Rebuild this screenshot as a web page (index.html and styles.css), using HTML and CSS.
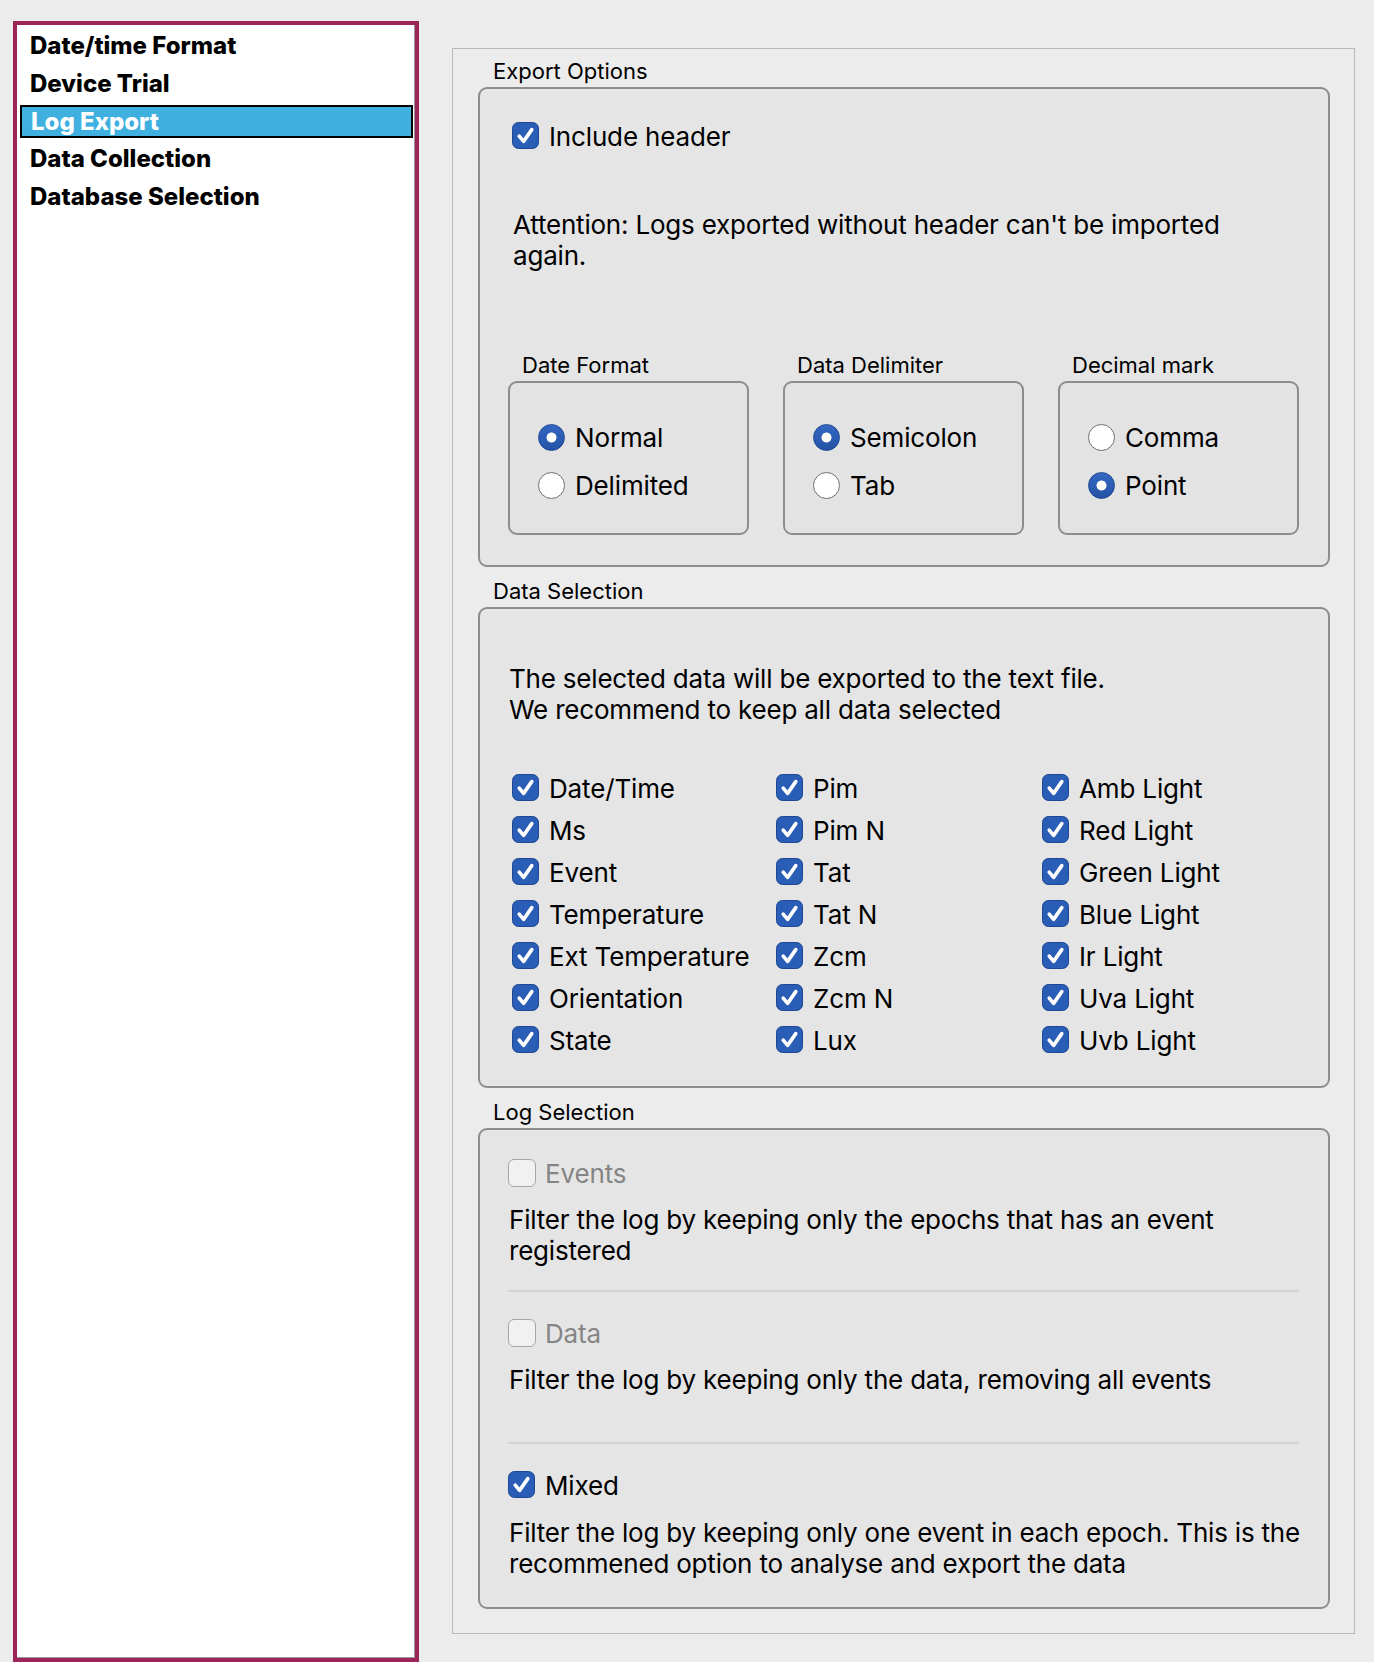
FILE: index.html
```html
<!DOCTYPE html>
<html lang="en">
<head>
<meta charset="utf-8">
<title>Log Export</title>
<link rel="stylesheet" href="styles.css">
</head>
<body>
<svg class="defs" width="0" height="0" aria-hidden="true">
  <defs>
    <symbol id="chk" viewBox="0 0 27 27">
      <rect x="0.5" y="0.5" width="26" height="26" rx="6" fill="#2a5db5" stroke="#1d4794"/>
      <path d="M7.2 14.2 L11.6 19.4 L19.8 7.6" fill="none" stroke="#fff" stroke-width="3.6" stroke-linecap="round" stroke-linejoin="round"/>
    </symbol>
  </defs>
</svg>
<div class="app">
  <aside class="sidebar">
    <ul class="nav">
      <li class="nav-item">Date/time Format</li>
      <li class="nav-item">Device Trial</li>
      <li class="nav-item selected">Log Export</li>
      <li class="nav-item">Data Collection</li>
      <li class="nav-item">Database Selection</li>
    </ul>
  </aside>

  <main class="panel">
    <section class="group">
      <div class="group-label">Export Options</div>
      <div class="group-box export-box">
        <div class="check-row include-row">
          <svg class="cb"><use href="#chk"/></svg><span>Include header</span>
        </div>
        <p class="text attention">Attention: Logs exported without header can't be imported<br>again.</p>
        <div class="subgroups">
          <div class="subgroup">
            <div class="sub-label">Date Format</div>
            <div class="sub-box">
              <div class="radio-row"><span class="radio on"></span><span>Normal</span></div>
              <div class="radio-row"><span class="radio"></span><span>Delimited</span></div>
            </div>
          </div>
          <div class="subgroup">
            <div class="sub-label">Data Delimiter</div>
            <div class="sub-box">
              <div class="radio-row"><span class="radio on"></span><span>Semicolon</span></div>
              <div class="radio-row"><span class="radio"></span><span>Tab</span></div>
            </div>
          </div>
          <div class="subgroup">
            <div class="sub-label">Decimal mark</div>
            <div class="sub-box">
              <div class="radio-row"><span class="radio"></span><span>Comma</span></div>
              <div class="radio-row"><span class="radio on"></span><span>Point</span></div>
            </div>
          </div>
        </div>
      </div>
    </section>

    <section class="group">
      <div class="group-label">Data Selection</div>
      <div class="group-box data-box">
        <p class="text data-intro">The selected data will be exported to the text file.<br>We recommend to keep all data selected</p>
        <div class="data-grid">
          <div class="check-row"><svg class="cb"><use href="#chk"/></svg><span>Date/Time</span></div>
          <div class="check-row"><svg class="cb"><use href="#chk"/></svg><span>Pim</span></div>
          <div class="check-row"><svg class="cb"><use href="#chk"/></svg><span>Amb Light</span></div>
          <div class="check-row"><svg class="cb"><use href="#chk"/></svg><span>Ms</span></div>
          <div class="check-row"><svg class="cb"><use href="#chk"/></svg><span>Pim N</span></div>
          <div class="check-row"><svg class="cb"><use href="#chk"/></svg><span>Red Light</span></div>
          <div class="check-row"><svg class="cb"><use href="#chk"/></svg><span>Event</span></div>
          <div class="check-row"><svg class="cb"><use href="#chk"/></svg><span>Tat</span></div>
          <div class="check-row"><svg class="cb"><use href="#chk"/></svg><span>Green Light</span></div>
          <div class="check-row"><svg class="cb"><use href="#chk"/></svg><span>Temperature</span></div>
          <div class="check-row"><svg class="cb"><use href="#chk"/></svg><span>Tat N</span></div>
          <div class="check-row"><svg class="cb"><use href="#chk"/></svg><span>Blue Light</span></div>
          <div class="check-row"><svg class="cb"><use href="#chk"/></svg><span>Ext Temperature</span></div>
          <div class="check-row"><svg class="cb"><use href="#chk"/></svg><span>Zcm</span></div>
          <div class="check-row"><svg class="cb"><use href="#chk"/></svg><span>Ir Light</span></div>
          <div class="check-row"><svg class="cb"><use href="#chk"/></svg><span>Orientation</span></div>
          <div class="check-row"><svg class="cb"><use href="#chk"/></svg><span>Zcm N</span></div>
          <div class="check-row"><svg class="cb"><use href="#chk"/></svg><span>Uva Light</span></div>
          <div class="check-row"><svg class="cb"><use href="#chk"/></svg><span>State</span></div>
          <div class="check-row"><svg class="cb"><use href="#chk"/></svg><span>Lux</span></div>
          <div class="check-row"><svg class="cb"><use href="#chk"/></svg><span>Uvb Light</span></div>
        </div>
      </div>
    </section>

    <section class="group">
      <div class="group-label">Log Selection</div>
      <div class="group-box log-box">
        <div class="log-option opt-events">
          <div class="check-row disabled"><span class="cb-off"></span><span>Events</span></div>
          <p class="text log-desc">Filter the log by keeping only the epochs that has an event<br>registered</p>
        </div>
        <div class="log-option opt-data">
          <div class="check-row disabled"><span class="cb-off"></span><span>Data</span></div>
          <p class="text log-desc">Filter the log by keeping only the data, removing all events</p>
        </div>
        <div class="log-option opt-mixed">
          <div class="check-row"><svg class="cb"><use href="#chk"/></svg><span>Mixed</span></div>
          <p class="text log-desc">Filter the log by keeping only one event in each epoch. This is the<br>recommened option to analyse and export the data</p>
        </div>
      </div>
    </section>
  </main>
</div>
</body>
</html>
```

FILE: styles.css
```css
* { box-sizing: border-box; }

html, body {
  margin: 0;
  padding: 0;
  background: #ececec;
  height: 1662px;
  overflow: hidden;
}

body {
  font-family: Inter, "Noto Sans", "Liberation Sans", sans-serif;
  color: #000;
}

.defs { position: absolute; width: 0; height: 0; }

.app {
  display: flex;
  align-items: flex-start;
  padding: 21px 0 0 13px;
}

/* Sidebar */
.sidebar {
  width: 406px;
  height: 1641px;
  border: 4px solid #9b2559;
  background: #fff;
  box-shadow: inset -1px -1px 0 #9a9a9a;
  flex: none;
}

.nav {
  list-style: none;
  margin: 0;
  padding: 4px 2px 0 3px;
}

.nav-item {
  height: 33px;
  margin-bottom: 4.75px;
  padding-left: 8px;
  border: 2px solid transparent;
  font-size: 24px;
  font-weight: 800;
  line-height: 29px;
  letter-spacing: 0;
  white-space: nowrap;
}

.nav-item.selected {
  background: #40b0e0;
  border-color: #000;
  color: #fff;
  padding-left: 9px;
}

/* Main panel */
.panel {
  margin: 27px 0 0 33px;
  width: 903px;
  height: 1586px;
  border: 1px solid #b9b9b9;
  padding: 9px 24px 0 25px;
  flex: none;
}

.group + .group { margin-top: 11px; }

.group-label {
  font-size: 22px;
  line-height: 26px;
  padding-left: 15px;
  margin-bottom: 3px;
  letter-spacing: 0;
}

.group-box {
  border: 2px solid #8d8d8d;
  border-radius: 9px;
  background: #e5e5e5;
}

.text {
  margin: 0;
  font-size: 26px;
  line-height: 31px;
  letter-spacing: -0.2px;
  white-space: nowrap;
}

.check-row {
  display: flex;
  align-items: center;
  height: 27px;
  font-size: 26px;
  line-height: 31px;
  letter-spacing: -0.15px;
  white-space: nowrap;
}

.check-row span:last-child { padding-top: 2px; }

.cb {
  width: 27px;
  height: 27px;
  flex: none;
  margin-right: 10px;
}

.cb-off {
  width: 28px;
  height: 28px;
  flex: none;
  margin-right: 9px;
  border: 1.5px solid #a6a6a6;
  border-radius: 6px;
  background: #f1f1f1;
}

.check-row.disabled { color: #858585; }

/* Export options */
.export-box {
  padding: 33px 29px 30px 28px;
}

.include-row { padding-left: 4px; }

.attention {
  margin-top: 60px;
  padding-left: 5px;
}

.subgroups {
  display: grid;
  grid-template-columns: repeat(3, 241px);
  column-gap: 34px;
  margin-top: 81px;
}

.sub-label {
  font-size: 22px;
  line-height: 26px;
  padding-left: 14px;
  margin-bottom: 3px;
}

.sub-box {
  height: 154px;
  border: 2px solid #8d8d8d;
  border-radius: 9px;
  background: #e3e3e3;
  padding: 41px 0 0 28px;
}

.radio-row {
  display: flex;
  align-items: center;
  height: 27px;
  font-size: 26px;
  letter-spacing: -0.15px;
  white-space: nowrap;
}

.radio-row + .radio-row { margin-top: 21px; }

.radio {
  width: 27px;
  height: 27px;
  flex: none;
  margin-right: 10px;
  border-radius: 50%;
  background: #fff;
  border: 1.5px solid #6f6f6f;
}

.radio.on {
  border: 1px solid #1d4794;
  background:
    radial-gradient(circle at 50% 50%, #fff 0, #fff 4.6px, rgba(255,255,255,0) 5.4px),
    linear-gradient(#3467c2, #2452a6);
}

/* Data selection */
.data-box {
  padding: 54px 0 33px 29px;
}

.data-grid {
  display: grid;
  grid-template-columns: 264px 266px 265px;
  row-gap: 15px;
  margin-top: 49px;
  padding-left: 3px;
}

/* Log selection */
.log-box {
  padding: 29px 29px 28px 28px;
}

.log-option {
  border-top: 2px solid #d3d3d3;
}

.log-option.opt-events {
  border-top: none;
  height: 131px;
}

.opt-data {
  height: 152px;
  padding-top: 27px;
}

.opt-mixed {
  padding-top: 27px;
}

.log-desc {
  margin-top: 18px;
  padding-left: 1px;
}

.opt-mixed .log-desc { margin-top: 19px; }
```
